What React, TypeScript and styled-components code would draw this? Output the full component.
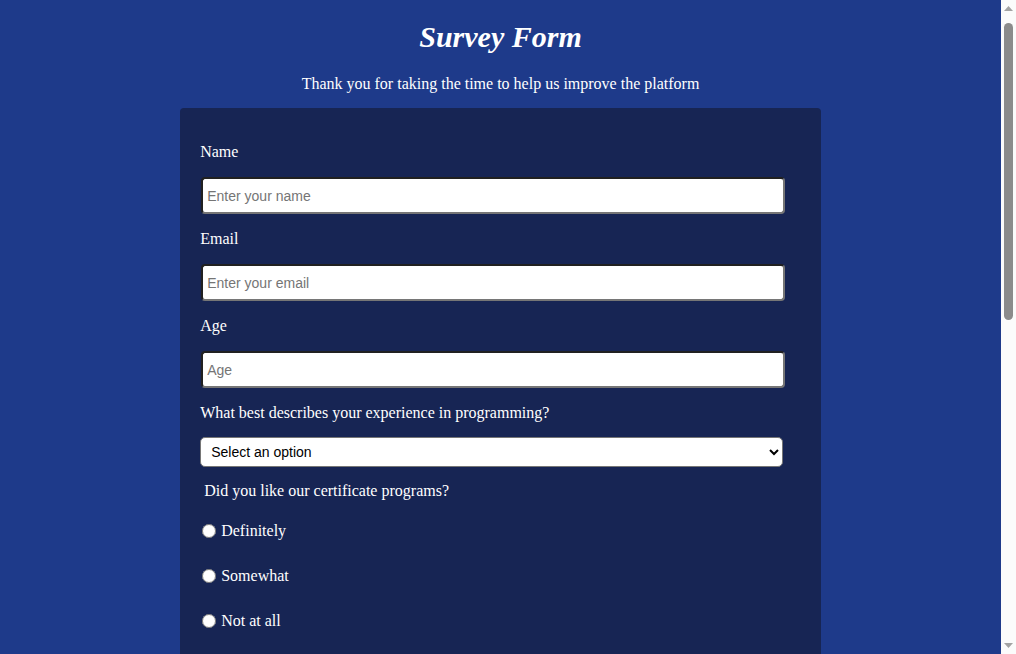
import { styled, createGlobalStyle } from "styled-components";

const GlobalStyle = createGlobalStyle`
  html, body {
    margin: 0;
    padding: 0;
  }
  body {
    padding-right: 15px;
    background: #1e3a8a;
    color: #ffffff;
    font-family: "Liberation Serif", "Times New Roman", serif;
  }
`;

const Page = styled.main`
  display: flex;
  flex-direction: column;
  align-items: center;
  padding-bottom: 40px;
`;

const Title = styled.h1`
  margin: 18px 0 20px;
  font-size: 30px;
  font-style: italic;
  font-weight: bold;
  line-height: 37px;
`;

const Description = styled.p`
  margin: 0 0 15px;
  font-size: 16px;
  line-height: 18px;
`;

const Form = styled.form`
  width: 60%;
  padding: 35px 20px 20px;
  background: #172554;
  border-radius: 4px;
`;

const Label = styled.label`
  display: block;
  margin: 0 0 16px;
  font-size: 16px;
  line-height: 18px;
`;

const Question = styled(Label)`
  margin-bottom: 15px;
`;

const GroupTitle = styled.p`
  margin: 0;
  padding-left: 4px;
  font-size: 16px;
  line-height: 18px;
`;

const Input = styled.input`
  display: block;
  box-sizing: border-box;
  width: 584px;
  height: 37px;
  margin: 0 0 16px 1px;
  padding: 0 4px;
  border: 2px inset #767676;
  border-radius: 4px;
  background: #ffffff;
  font-family: "Liberation Sans", Arial, sans-serif;
  font-size: 14px;

  &::placeholder {
    color: #757575;
  }
`;

const Select = styled.select`
  display: block;
  box-sizing: border-box;
  width: 583px;
  height: 30px;
  margin: 0 0 15px;
  padding: 0 6px;
  border: 1px solid #767676;
  border-radius: 5px;
  background: #ffffff;
  color: #000000;
  font-family: "Liberation Sans", Arial, sans-serif;
  font-size: 14px;
`;

const OptionList = styled.div`
  display: flex;
  flex-direction: column;
  gap: 27px;
  margin: 22px 0 22px;
`;

const OptionRow = styled.label`
  display: flex;
  align-items: center;
  height: 18px;
  font-size: 16px;
`;

const Choice = styled.input`
  width: 14px;
  height: 14px;
  margin: 0 5px 0 2px;
`;

const TextArea = styled.textarea`
  display: block;
  box-sizing: border-box;
  width: 584px;
  height: 150px;
  margin: 0 0 20px 1px;
  padding: 6px 4px;
  border: 2px inset #767676;
  border-radius: 4px;
  font-family: "Liberation Sans", Arial, sans-serif;
  font-size: 14px;
  resize: vertical;
`;

const Submit = styled.button`
  display: block;
  width: 584px;
  height: 45px;
  margin-left: 1px;
  border: none;
  border-radius: 4px;
  background: #3b82f6;
  color: #ffffff;
  font-family: "Liberation Serif", "Times New Roman", serif;
  font-size: 18px;
  cursor: pointer;
`;

/* browser scrollbar, as in the screenshot */
const ScrollBar = styled.div`
  position: fixed;
  top: 0;
  right: 0;
  width: 15px;
  height: 100vh;
  display: flex;
  flex-direction: column;
  align-items: center;
  background: #fbfbfb;
`;

const Arrow = styled.div`
  height: 17px;
  display: flex;
  align-items: center;
  justify-content: center;
`;

const Track = styled.div`
  flex: 1;
  padding-top: 6px;
`;

const Thumb = styled.div`
  width: 9px;
  height: 297px;
  border-radius: 5px;
  background: #8b8b8b;
`;

const likeOptions = ["Definitely", "Somewhat", "Not at all"];
const improvements = [
  "Front-end Projects",
  "Back-end Projects",
  "Data Visualization",
  "Challenges",
  "Open Source Community",
  "Videos",
];

export default function App() {
  return (
    <>
      <GlobalStyle />
      <Page>
        <Title>Survey Form</Title>
        <Description>
          Thank you for taking the time to help us improve the platform
        </Description>
        <Form onSubmit={(e) => e.preventDefault()}>
          <Label htmlFor="name">Name</Label>
          <Input id="name" type="text" placeholder="Enter your name" />
          <Label htmlFor="email">Email</Label>
          <Input id="email" type="email" placeholder="Enter your email" />
          <Label htmlFor="age">Age</Label>
          <Input id="age" type="number" placeholder="Age" />

          <Question htmlFor="experience">
            What best describes your experience in programming?
          </Question>
          <Select id="experience" defaultValue="">
            <option value="" disabled>
              Select an option
            </option>
            <option>Beginner</option>
            <option>Intermediate</option>
            <option>Advanced</option>
          </Select>

          <GroupTitle>Did you like our certificate programs?</GroupTitle>
          <OptionList>
            {likeOptions.map((o) => (
              <OptionRow key={o}>
                <Choice type="radio" name="like" value={o} />
                {o}
              </OptionRow>
            ))}
          </OptionList>

          <Question htmlFor="feature">
            Which feature do you like the most?
          </Question>
          <Select id="feature" defaultValue="">
            <option value="" disabled>
              Select an option
            </option>
            <option>Challenges</option>
            <option>Projects</option>
            <option>Community</option>
          </Select>

          <GroupTitle>
            What would you like to see improved? (Check all that apply)
          </GroupTitle>
          <OptionList>
            {improvements.map((o) => (
              <OptionRow key={o}>
                <Choice type="checkbox" value={o} />
                {o}
              </OptionRow>
            ))}
          </OptionList>

          <Label htmlFor="comments">Any comments or suggestions?</Label>
          <TextArea id="comments" placeholder="Enter your comment here..." />
          <Submit type="submit">Submit</Submit>
        </Form>
      </Page>
      <ScrollBar aria-hidden>
        <Arrow>
          <svg width="9" height="5" viewBox="0 0 9 5">
            <path d="M0 5 L4.5 0 L9 5 Z" fill="#a3a3a3" />
          </svg>
        </Arrow>
        <Track>
          <Thumb />
        </Track>
        <Arrow>
          <svg width="9" height="5" viewBox="0 0 9 5">
            <path d="M0 0 L4.5 5 L9 0 Z" fill="#a3a3a3" />
          </svg>
        </Arrow>
      </ScrollBar>
    </>
  );
}
